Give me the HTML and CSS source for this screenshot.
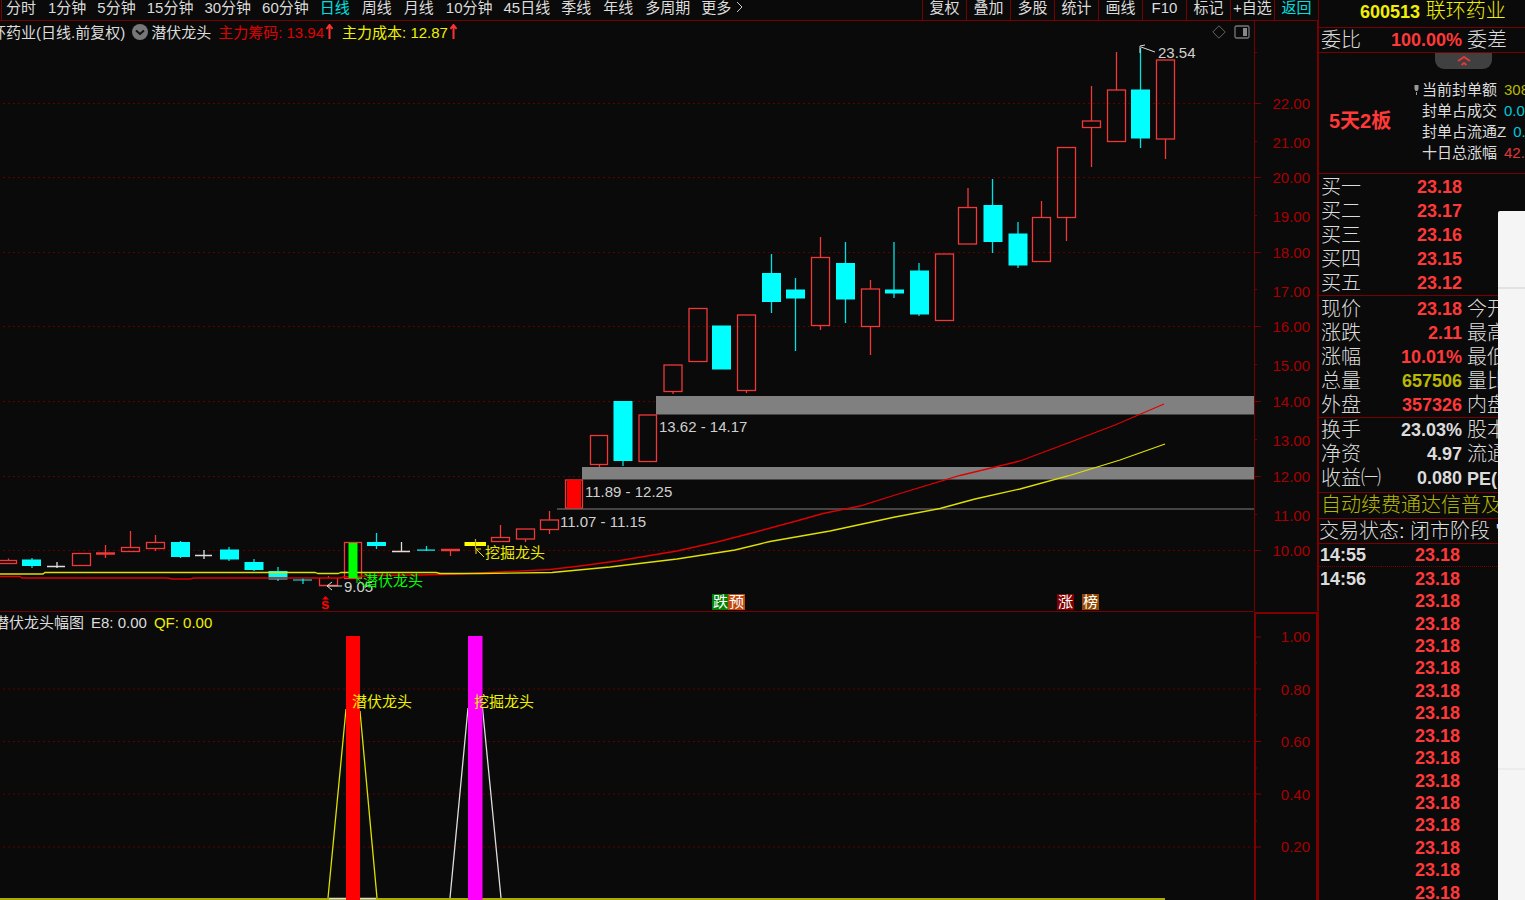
FILE: index.html
```html
<!DOCTYPE html>
<html lang="zh-CN">
<head>
<meta charset="utf-8">
<title>600513 联环药业</title>
<link rel="stylesheet" href="styles.css">
</head>
<body>
<div class="app">
  <main class="main">
    <header class="toolbar">
      <nav class="periods">
        <button class="tab cjk">分时</button>
        <button class="tab">1分钟</button>
        <button class="tab">5分钟</button>
        <button class="tab">15分钟</button>
        <button class="tab">30分钟</button>
        <button class="tab">60分钟</button>
        <button class="tab cjk active">日线</button>
        <button class="tab cjk">周线</button>
        <button class="tab cjk">月线</button>
        <button class="tab">10分钟</button>
        <button class="tab">45日线</button>
        <button class="tab cjk">季线</button>
        <button class="tab cjk">年线</button>
        <button class="tab">多周期</button>
        <button class="tab more">更多<svg width="7" height="12" viewBox="0 0 7 12"><path d="M1 1l5 5-5 5"/></svg></button>
      </nav>
      <nav class="tools">
        <button class="tool">复权</button>
        <button class="tool">叠加</button>
        <button class="tool">多股</button>
        <button class="tool">统计</button>
        <button class="tool">画线</button>
        <button class="tool">F10</button>
        <button class="tool">标记</button>
        <button class="tool">+自选</button>
        <button class="tool active">返回</button>
      </nav>
    </header>

    <section class="chart price-chart">
      <div class="legend">
        <span class="name">环药业(日线.前复权)</span>
        <button class="round" aria-label="展开"><svg width="16" height="16" viewBox="0 0 16 16"><circle cx="8" cy="8" r="8"/><path d="M4 6.500l4 3.500 4-3.500"/></svg></button>
        <span class="indicator">潜伏龙头</span>
        <span class="red">主力筹码: 13.94</span>
        <svg class="up" width="7" height="16" viewBox="0 0 7 16"><path d="M3.500 1v14M0.500 5l3-4 3 4"/></svg>
        <span class="yellow">主力成本: 12.87</span>
        <svg class="up" width="7" height="16" viewBox="0 0 7 16"><path d="M3.500 1v14M0.500 5l3-4 3 4"/></svg>
        <span class="corner">
          <button aria-label="标记"><svg width="14" height="14" viewBox="0 0 14 14"><path d="M7 .8L13.200 7 7 13.200.8 7z" fill="none" stroke="#666"/></svg></button>
          <button aria-label="侧栏"><svg width="16" height="14" viewBox="0 0 16 14"><rect x="1" y="1" width="14" height="12" rx="1.500" fill="none" stroke="#777" stroke-width="1.300"/><path d="M9 3h4v8H9z" fill="#888"/></svg></button>
        </span>
      </div>
      <svg class="plot" viewBox="0 21 1318 590">
        <path class="grid" d="M3 103.500H1254M3 177.500H1254M3 252.500H1254M3 326.500H1254M3 401.500H1254M3 476.500H1254M3 550.500H1254"/>
        <g class="band">
          <rect x="656" y="396" width="598" height="18.500"/>
          <rect x="582" y="467" width="672" height="12.500"/>
          <rect x="557" y="508.500" width="697" height="1"/>
        </g>
        <path class="axis" d="M1254.500 21V611M1317.500 21V611M1255 103.500h6M1255 177.500h6M1255 252.500h6M1255 326.500h6M1255 401.500h6M1255 476.500h6M1255 550.500h6M1255 141.500h2M1255 215.500h2M1255 289.500h2M1255 364.500h2M1255 439.500h2M1255 514.500h2M1255 52.500h2"/>
        <g class="scale">
          <text x="1310" y="109">22.00</text><text x="1310" y="148">21.00</text><text x="1310" y="183">20.00</text>
          <text x="1310" y="222">19.00</text><text x="1310" y="258">18.00</text><text x="1310" y="297">17.00</text>
          <text x="1310" y="332">16.00</text><text x="1310" y="371">15.00</text><text x="1310" y="407">14.00</text>
          <text x="1310" y="446">13.00</text><text x="1310" y="482">12.00</text><text x="1310" y="521">11.00</text>
          <text x="1310" y="556">10.00</text>
        </g>
        <g class="fall">
          <path d="M32 558v10M180.500 541v17M229 547v14M254 559v12M278 567v14M303 578v6M376.500 533v16M426.500 546v5M623 460v6M771.500 254v59M795.500 278v73M845.500 242v81M894 242v56M919 263v53M992.500 179v74M1018 222v46M1140.500 48v100"/>
          <rect x="22" y="559.500" width="19" height="6.500"/>
          <rect x="171" y="542" width="19" height="15"/>
          <rect x="220" y="549.500" width="19" height="10"/>
          <rect x="244.500" y="562" width="19" height="8"/>
          <rect x="268.500" y="571" width="19" height="8.500"/>
          <rect x="293" y="579.500" width="19" height="1"/>
          <rect x="367" y="542" width="19" height="4"/>
          <rect x="417" y="549.500" width="18" height="1.200"/>
          <rect x="613.500" y="401" width="19" height="60"/>
          <rect x="712" y="325.500" width="19" height="44"/>
          <rect x="762" y="273" width="19" height="29"/>
          <rect x="786" y="289.500" width="19" height="9"/>
          <rect x="836" y="263" width="19" height="36.500"/>
          <rect x="885" y="289.500" width="19" height="4"/>
          <rect x="910" y="270.500" width="19" height="44"/>
          <rect x="983.500" y="205" width="19" height="37"/>
          <rect x="1008.500" y="233.500" width="19" height="32"/>
          <rect x="1131" y="89.500" width="19" height="49"/>
        </g>
        <g class="rise">
          <path d="M8.500 558.500v2M105.500 545v13M96 553h19M96 554h19M130.500 531v16M155.500 535v7M155.500 549v2M328.500 576v2M450.500 551v5M441 549.500h19M441 550.500h19M475.500 539v10M500.500 525v12M525.500 539v3M549.500 511v9M549.500 530v4M599.500 465v2M673 392v2M746.500 390v3M820.500 237v20M820.500 326v4M870.500 280v9M870.500 327v28M968 188v19M1041.500 201v16M1066.500 218v23M1091.500 86v35M1091.500 128v39M1116.500 52v38M1165.500 139v20"/>
          <rect x="-1.500" y="560.500" width="18" height="3"/>
          <rect x="72.500" y="553.500" width="18" height="12"/>
          <rect x="121.500" y="547.500" width="18" height="4"/>
          <rect x="146.500" y="542.500" width="18" height="6"/>
          <path d="M319.500 578v7.500h18V578"/>
          <rect x="344.500" y="542.500" width="17" height="36"/>
          <rect x="491.500" y="537.500" width="18" height="4"/>
          <rect x="516.500" y="529" width="18" height="10"/>
          <rect x="540.500" y="520" width="18" height="9.500"/>
          <rect x="565.500" y="480" width="17" height="28"/>
          <rect x="590.500" y="435.500" width="17" height="29"/>
          <rect x="639" y="415" width="17.500" height="46.500"/>
          <rect x="664" y="365" width="18" height="26.500"/>
          <rect x="689" y="308.500" width="18" height="53"/>
          <rect x="737.500" y="315" width="18" height="75.500"/>
          <rect x="811.500" y="257.500" width="18" height="68"/>
          <rect x="861.500" y="289" width="18" height="37.500"/>
          <rect x="935.500" y="254" width="18" height="66.500"/>
          <rect x="958.500" y="207.500" width="18" height="36.500"/>
          <rect x="1032.500" y="217.500" width="18" height="44"/>
          <rect x="1057.500" y="147.500" width="18" height="70"/>
          <rect x="1082.500" y="121" width="18" height="6.500"/>
          <rect x="1107.500" y="90" width="18" height="51.500"/>
          <rect x="1156.500" y="60" width="18" height="79"/>
        </g>
        <path d="M47 566.500h18M57 562v6M195 555.500h17M204 550v9M392 551.500h18M401.500 542v9" stroke="#ddd" stroke-width="1.300" fill="none"/>
        <rect x="567" y="480" width="14" height="28" fill="#f00"/>
        <path d="M0 576.500H20L22 578H168L172 579H190L194 578H340L344 577L376 575.500L420 575L460 574L500 572L550 569.500L580 566L617 561L677 551L717 542L750 533.500L800 520L823 513.500L860 506L900 493.500L960 475.500L1020 461L1068 443L1115 425L1164 404" fill="none" stroke="#e00000" stroke-width="1.300"/>
        <path d="M0 574H43L45 572.500H315L318 573.500H338L341 572.500H436L440 573.500H480L552 572.500L610 567L677 559L735 550L770 541.500L830 531L895 517L940 508.500L975 499L1020 489L1068 476L1120 460L1165 444" fill="none" stroke="#e0e000" stroke-width="1.300"/>
        <rect x="348.500" y="543" width="9" height="35" fill="#0f0"/>
        <rect x="464.500" y="542" width="21.500" height="4" fill="#ff0"/>
        <path d="M475.500 539v10" stroke="#c8a020"/>
        <g class="note">
          <text x="1158" y="58">23.54</text>
          <text x="659" y="432">13.62 - 14.17</text>
          <text x="585" y="497">11.89 - 12.25</text>
          <text x="560" y="527">11.07 - 11.15</text>
          <text x="344" y="592">9.05</text>
          <path d="M1155 52l-14-5M1140 53v-7M1140 46l5-1M342 586h-15M332 582l-5 4 5 4"/>
        </g>
        <path d="M366 588l-9-10M357 583v-5h5" stroke="#0f0" fill="none"/>
        <text x="363" y="586" fill="#0f0">潜伏龙头</text>
        <path d="M484 557l-8-8M476 554v-5h5" stroke="#e8e800" fill="none"/>
        <text x="485" y="558" fill="#e8e800">挖掘龙头</text>
        <path d="M325.500 596l3.500 3.500h-7z" fill="#f00"/>
        <text x="321" y="609" fill="#f00" font-weight="700">s</text>
        <g class="badge">
          <rect x="712" y="594" width="16" height="16" fill="#008000"/><text x="713" y="607">跌</text>
          <rect x="728" y="594" width="17" height="16" fill="#c04810"/><text x="729" y="607">预</text>
          <rect x="1057" y="594" width="17" height="16" fill="#800000"/><text x="1058" y="607">涨</text>
          <rect x="1082" y="594" width="17" height="16" fill="#904800"/><text x="1083" y="607">榜</text>
        </g>
      </svg>
    </section>

    <section class="chart signal-chart">
      <div class="legend">
        <span class="name-short">潜伏龙头幅图</span>
        <span>E8: 0.00</span>
        <span class="yellow">QF: 0.00</span>
      </div>
      <svg class="plot" viewBox="0 611 1318 289">
        <path class="grid" d="M3 689H1254M3 741.500H1254M3 794H1254M3 847H1254"/>
        <path class="axis" d="M0 611.500H1254"/>
        <path class="frame" d="M1255 901V613H1317V901"/>
        <path class="frame-ticks" d="M1255 637h6M1255 689h6M1255 741.500h6M1255 794h6M1255 847h6M1255 663h2M1255 715h2M1255 768h2M1255 821h2"/>
        <g class="scale">
          <text x="1310" y="642">1.00</text><text x="1310" y="695">0.80</text><text x="1310" y="747">0.60</text>
          <text x="1310" y="800">0.40</text><text x="1310" y="852">0.20</text>
        </g>
        <path d="M346 709L328 898M360 711L377 898M0 899H1165" fill="none" stroke="#e0e000" stroke-width="1.300"/>
        <path d="M468 708L450 898M482.500 708L501 898M329 898.500H376" fill="none" stroke="#ddd" stroke-width="1.300"/>
        <rect x="346" y="636" width="14" height="264" fill="#f00"/>
        <rect x="468" y="636" width="14.500" height="264" fill="#f0f"/>
        <text x="352" y="707" fill="#f0f000">潜伏龙头</text>
        <text x="474" y="707" fill="#f0f000">挖掘龙头</text>
      </svg>
    </section>
  </main>

  <aside class="quote">
    <h1 class="title"><b>600513</b> 联环药业</h1>
    <table class="rows ratio">
      <tr><th>委比</th><td class="up-value">100.00%</td><th>委差</th></tr>
    </table>
    <section class="limit">
      <button class="pull" aria-label="收起"><svg width="14" height="10" viewBox="0 0 14 10"><path d="M1 5l6-4 6 4M4.500 9L7 7l2.500 2"/></svg></button>
      <div class="limit-body">
        <strong class="streak">5天2板</strong>
        <ul class="facts">
          <li><svg class="pin" width="5" height="12" viewBox="0 0 5 12"><path d="M.5 1h4v4l-1 2h-2l-1-2zM2 8h1v3H2z" fill="#999"/></svg>当前封单额<span class="olive">308</span></li>
          <li>封单占成交<span class="cyan">0.0</span></li>
          <li>封单占流通Z<span class="cyan">0.</span></li>
          <li>十日总涨幅<span class="soft-red">42.</span></li>
        </ul>
      </div>
    </section>
    <table class="rows spaced">
      <tr><th>买一</th><td class="up-value">23.18</td><th></th></tr>
      <tr><th>买二</th><td class="up-value">23.17</td><th></th></tr>
      <tr><th>买三</th><td class="up-value">23.16</td><th></th></tr>
      <tr><th>买四</th><td class="up-value">23.15</td><th></th></tr>
      <tr><th>买五</th><td class="up-value">23.12</td><th></th></tr>
    </table>
    <table class="rows spaced">
      <tr><th>现价</th><td class="up-value">23.18</td><th>今开</th></tr>
      <tr><th>涨跌</th><td class="up-value">2.11</td><th>最高</th></tr>
      <tr><th>涨幅</th><td class="up-value">10.01%</td><th>最低</th></tr>
      <tr><th>总量</th><td class="olive">657506</td><th>量比</th></tr>
      <tr><th>外盘</th><td class="up-value">357326</td><th>内盘</th></tr>
    </table>
    <table class="rows fundamentals">
      <tr><th>换手</th><td>23.03%</td><th>股本</th></tr>
      <tr><th>净资</th><td>4.97</td><th>流通</th></tr>
      <tr><th>收益㈠</th><td>0.080</td><th><b>PE(</b>动)</th></tr>
    </table>
    <p class="notice olive">自动续费通达信普及</p>
    <p class="status">交易状态: 闭市阶段 '</p>
    <table class="trades">
      <tr class="minute-end"><th>14:55</th><td>23.18</td><td></td></tr>
      <tr><th>14:56</th><td>23.18</td><td></td></tr>
      <tr><th></th><td>23.18</td><td></td></tr>
      <tr><th></th><td>23.18</td><td></td></tr>
      <tr><th></th><td>23.18</td><td></td></tr>
      <tr><th></th><td>23.18</td><td></td></tr>
      <tr><th></th><td>23.18</td><td></td></tr>
      <tr><th></th><td>23.18</td><td></td></tr>
      <tr><th></th><td>23.18</td><td></td></tr>
      <tr><th></th><td>23.18</td><td></td></tr>
      <tr><th></th><td>23.18</td><td></td></tr>
      <tr><th></th><td>23.18</td><td></td></tr>
      <tr><th></th><td>23.18</td><td></td></tr>
      <tr><th></th><td>23.18</td><td></td></tr>
      <tr><th></th><td>23.18</td><td></td></tr>
      <tr><th></th><td>23.18</td><td></td></tr>
    </table>
  </aside>
  <div class="float-panel"><div class="float-head"></div><div class="float-body"></div></div>
</div>
</body>
</html>
```
FILE: styles.css
```css
* { box-sizing: border-box; }

body {
  margin: 0;
  background: #0a0a0a;
  color: #dcdcdc;
  font: 400 15px/15px "Liberation Sans", "Noto Sans CJK SC", sans-serif;
}

button {
  margin: 0;
  padding: 0;
  border: 0;
  background: none;
  color: inherit;
  font: inherit;
  white-space: nowrap;
}

svg { display: block; }

.app {
  position: relative;
  display: flex;
  height: 100vh;
  overflow: hidden;
}

.main { flex: 1; min-width: 0; }

.toolbar {
  display: flex;
  justify-content: space-between;
  height: 21px;
  border-bottom: 1px solid #780000;
}

.periods {
  display: flex;
  gap: 11px;
  margin-left: 1px;
  padding: 0 0 6px 4px;
  border-left: 1px solid #780000;
}

.cjk { margin-right: 1px; }

.more { display: flex; align-items: center; gap: 5px; }
.more path { fill: none; stroke: #ccc; }

.active { color: #00e0e0; }

.tools {
  display: grid;
  grid-template-columns: repeat(9, 1fr);
  width: 396px;
}

.tool {
  padding-bottom: 6px;
  border-left: 1px solid #780000;
}

.chart { position: relative; overflow: hidden; }

.legend {
  position: absolute;
  inset: 0 0 auto;
  display: flex;
  align-items: center;
  gap: 7px;
  height: 22px;
  white-space: nowrap;
}

.name { margin-left: -9px; }
.name-short { margin-left: -6px; }
.indicator { margin-left: -4px; }

.round circle { fill: #777; }
.round path { fill: none; stroke: #111; stroke-width: 2; }

.up { margin: 0 2px 0 -5px; fill: none; stroke: #ff3030; stroke-width: 2; }

.corner {
  display: flex;
  align-items: center;
  gap: 8px;
  margin: 0 68px 0 auto;
}

.red { color: #e00000; }
.yellow { color: #f0f000; }
.cyan { color: #00c8d8; }
.olive { color: #b8b800; }
.soft-red { color: #e03838; }

.plot { width: 100%; height: auto; overflow: hidden; }

.grid { fill: none; stroke: #600000; stroke-dasharray: 2 3; }
.axis { fill: none; stroke: #780000; }
.frame { fill: none; stroke: #800000; stroke-width: 2; }
.frame-ticks { fill: none; stroke: #800000; }
.band { fill: #808080; }
.scale { fill: #a80000; text-anchor: end; }
.fall { fill: #00ffff; }
.fall path { stroke: #00e0e0; stroke-width: 1.3; }
.rise { fill: none; stroke: #f03838; stroke-width: 1.3; }
.note { fill: #d0d0d0; }
.note path { fill: none; stroke: #ddd; }
.badge text { fill: #fff; }

.quote {
  flex: 0 0 207px;
  overflow: hidden;
  border-left: 1px solid #780000;
  font-size: 20px;
  white-space: nowrap;
}

.quote b { font-size: 18px; font-weight: 700; }

.title {
  height: 28px;
  margin: 0;
  padding-left: 41px;
  border-bottom: 1px solid #780000;
  color: #f0f000;
  font-size: 20px;
  font-weight: 300;
  line-height: 22px;
}

.rows, .trades {
  width: 100%;
  table-layout: fixed;
  border-collapse: collapse;
}

.rows {
  border-bottom: 1px solid #780000;
  border-collapse: separate;
  border-spacing: 0;
}

.spaced { margin-top: 1px; }

.rows tr { height: 24px; }

.rows th, .rows td {
  width: 81px;
  padding: 0;
  line-height: 20px;
  text-align: right;
}

.rows th {
  width: 62px;
  padding-left: 2px;
  font-weight: 300;
  text-align: left;
}

.rows th:last-child { width: auto; padding-left: 5px; }

.rows td, .trades { font-size: 18px; font-weight: 700; }

.rows .up-value, .up-value { color: #ff3838; }

.limit { height: 121px; border-bottom: 1px solid #780000; }

.pull {
  display: grid;
  place-items: center;
  width: 57px;
  height: 16px;
  margin-left: 116px;
  border-radius: 0 0 9px 9px;
  background: #404040;
}

.pull path { fill: none; stroke: #e83838; stroke-width: 2; }

.limit-body {
  display: flex;
  align-items: center;
  justify-content: space-between;
  padding: 10px 0 0 10px;
}

.streak { color: #ff3838; font-weight: 600; }

.facts {
  width: 103px;
  margin: 0;
  padding: 0;
  font-size: 15px;
  line-height: 21px;
  list-style: none;
}

.facts li { position: relative; display: flex; gap: 7px; }

.pin { position: absolute; top: 5px; left: -8px; }

.rows.fundamentals { border-bottom: 0; }

.notice, .status {
  margin: 0;
  border: 0 solid #780000;
  border-width: 1px 0;
  font-weight: 300;
}

.notice {
  margin-top: 2px;
  padding-left: 2px;
  line-height: 25px;
}

.status { border-top: 0; line-height: 24px; }

.trades { height: 360px; }

.trades th, .trades td { padding: 0; line-height: 20px; }
.trades th { width: 62px; padding-left: 1px; text-align: left; }
.trades td { width: 79px; color: #ff3838; text-align: right; }
.trades td:last-child { width: auto; }
.trades .minute-end { border-bottom: 1px dotted #780000; }

.float-panel {
  position: absolute;
  inset: 211px 0 0 auto;
  display: flex;
  flex-direction: column;
  width: 27px;
  border-radius: 2px 0 0 0;
  background: #f5f5f5;
}

.float-head { height: 78px; border-bottom: 2px solid #e2e2e2; }
.float-body { height: 481px; border-bottom: 2px solid #ececec; }
```
